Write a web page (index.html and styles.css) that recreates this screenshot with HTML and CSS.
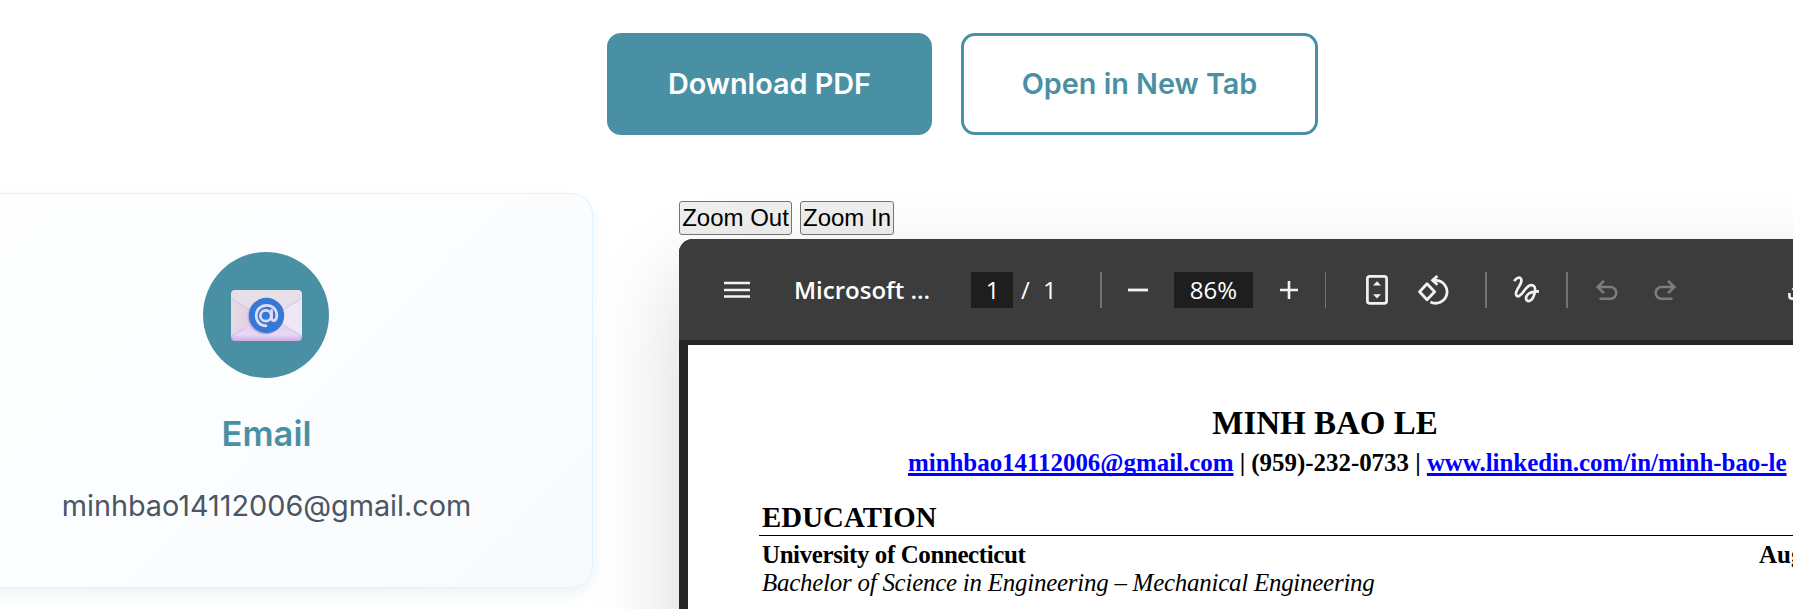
FILE: index.html
```html
<!DOCTYPE html>
<html lang="en">
<head>
<meta charset="utf-8">
<title>Resume</title>
<link rel="stylesheet" href="styles.css">
</head>
<body>
<main class="page">
  <div class="actions">
    <a class="btn btn-solid">Download PDF</a>
    <a class="btn btn-outline">Open in New Tab</a>
  </div>
  <div class="columns">
    <section class="card">
      <div class="badge">
        <svg width="71" height="51" viewBox="0 0 71 51">
          <defs>
            <linearGradient id="env" x1="0" y1="0" x2="0" y2="1"><stop offset="0" stop-color="#e6e0e6"/><stop offset=".6" stop-color="#e8dcf0"/><stop offset="1" stop-color="#d0aee6"/></linearGradient>
            <linearGradient id="side" x1="0" y1="0" x2="1" y2="0"><stop offset="0" stop-color="#e9d9e4"/><stop offset="1" stop-color="#dccde3"/></linearGradient>
            <linearGradient id="low" x1="0" y1="0" x2="0" y2="1"><stop offset="0" stop-color="#ddcdea"/><stop offset=".7" stop-color="#e8d8f5"/><stop offset="1" stop-color="#cfa9e6"/></linearGradient>
          </defs>
          <rect width="71" height="51" rx="4" fill="url(#env)"/>
          <path d="M0 8 30 26 0 46Z" fill="url(#side)"/>
          <path d="M71 8 41 26 71 46Z" fill="#efe8f4"/>
          <path d="M2 46 30 30H41L69 46Q69 51 66 51H5Q2 51 2 46Z" fill="url(#low)"/>
          <path d="M1 9 28 25M70 9 43 25" stroke="#d2c4d8" stroke-width="1" fill="none"/>
          <circle cx="34.5" cy="26.5" r="18" fill="#b8a2d4" opacity=".7"/>
          <circle cx="35.5" cy="25.5" r="17.7" fill="#3379d6"/>
          <g fill="none" stroke="#e4d8f4" stroke-width="2.7" stroke-linecap="round">
            <circle cx="34.8" cy="25.7" r="5.4"/>
            <path d="M40.6 20.4V28C40.6 32.2 45.8 31.6 45.8 25.4 45.8 19 41.3 15.3 35.6 15.3 29.5 15.3 25.2 19.8 25.2 25.6 25.2 31.8 29.4 35.8 35 35.8"/>
          </g>
        </svg>
      </div>
      <h3 class="card-title">Email</h3>
      <p class="card-text">minhbao14112006@gmail.com</p>
    </section>
    <section class="preview">
      <div class="zoom-row"><button class="zoom z-out">Zoom Out</button><button class="zoom z-in">Zoom In</button></div>
      <div class="viewer">
        <div class="toolbar">
          <svg class="i-menu" width="26" height="20" viewBox="0 0 26 20"><path d="M0 3H26M0 10H26M0 16.6H26" stroke="#f2f2f2" stroke-width="2.5"/></svg>
          <span class="doc-name">Microsoft ...</span>
          <span class="box box-page">1</span>
          <span class="slash">/</span>
          <span class="total">1</span>
          <i class="sep s1"></i>
          <svg class="i-minus" width="20" height="20" viewBox="0 0 20 20"><path d="M0 10H20" stroke="#f2f2f2" stroke-width="2.8"/></svg>
          <span class="box box-zoom">86%</span>
          <svg class="i-plus" width="18" height="18" viewBox="0 0 18 18"><path d="M0 9H18M9 0V18" stroke="#f2f2f2" stroke-width="2.6"/></svg>
          <i class="sep s2"></i>
          <svg class="i-fit" width="22" height="30" viewBox="0 0 22 30"><rect x="1.4" y="1.4" width="19.2" height="27" rx="2.4" fill="none" stroke="#f2f2f2" stroke-width="2.7"/><path d="M7 10.5 11 6.2 15 10.5ZM7 19.3H15L11 23.6Z" fill="#f2f2f2"/></svg>
          <svg class="i-rotate" width="32" height="30" viewBox="0 0 32 30"><g fill="none" stroke="#f2f2f2" stroke-width="2.8"><path d="M9 8.8 16.6 16.8 9 24.8 1.6 16.8Z" stroke-linejoin="round"/><path d="M14.4 5.4H18.4A11.4 11.4 0 1 1 12.4 26.9"/><path d="M19.4 .9 14.6 5.3 19.4 9.8"/></g></svg>
          <i class="sep s3"></i>
          <svg class="i-draw" width="27" height="27" viewBox="0 0 27 27"><path d="M1.2 5.2C3 1.8 7.6-.2 8.4 4 9.2 8.4 2.4 13.6 3 18 3.8 22.6 8 19.4 10.6 15.6 13.8 10.8 17.6 7.8 20.6 9.8 24 12.4 20.8 23.6 16.4 25 12.6 25.8 12 21.2 14.8 18.4 17.4 15.8 21.4 15.4 26 15.4" fill="none" stroke="#f2f2f2" stroke-width="2.7"/></svg>
          <i class="sep s4"></i>
          <svg class="i-undo" width="22" height="20" viewBox="0 0 22 20"><path d="M8 .9 1.6 7 8 13.1M1.8 7H14.5A5.8 5.8 0 0 1 14.5 18.7H3.5" fill="none" stroke="#7c7c7c" stroke-width="2.6"/></svg>
          <svg class="i-redo" width="22" height="20" viewBox="0 0 22 20"><path d="M14 .9 20.4 7 14 13.1M20.2 7H7.5A5.8 5.8 0 0 0 7.5 18.7H18.5" fill="none" stroke="#7c7c7c" stroke-width="2.6"/></svg>
          <svg class="i-save" width="24" height="26" viewBox="0 0 24 26"><path d="M1.4 16V19Q1.4 21.6 4 21.6H20Q22.6 21.6 22.6 19V16M12 1V16M4.4 11.2 12 17.4 19.6 11.2" fill="none" stroke="#f2f2f2" stroke-width="2.6"/></svg>
        </div>
        <div class="well">
          <article class="sheet">
            <h1 class="name">MINH BAO LE</h1>
            <p class="contact"><a>minhbao14112006@gmail.com</a> | (959)-232-0733 | <a>www.linkedin.com/in/minh-bao-le</a></p>
            <h2 class="heading">EDUCATION</h2>
            <div class="entry"><b class="school">University of Connecticut</b><b>Aug</b></div>
            <p class="degree">Bachelor of Science in Engineering – Mechanical Engineering</p>
          </article>
        </div>
      </div>
    </section>
  </div>
</main>
</body>
</html>
```
FILE: styles.css
```css
* { box-sizing: border-box; margin: 0; padding: 0; }
html, body { width: 100%; height: 609px; overflow: hidden; background: #fff; }
body { font-family: Inter, "Liberation Sans", sans-serif; }
.page { height: 609px; overflow: hidden; }
.actions { display: flex; gap: 29px; padding: 33px 0 0 607px; }
.btn { display: flex; align-items: center; justify-content: center; height: 102px; padding-bottom: 2px; border: 3px solid #4a90a4; border-radius: 14px; font-size: 28.8px; font-weight: 600; white-space: nowrap; }
.btn-solid { width: 325px; background: #4a90a4; color: #fff; }
.btn-outline { width: 357px; color: #4a90a4; }
.columns { display: flex; align-items: flex-start; padding-top: 58px; }
.card { flex: none; display: flex; flex-direction: column; align-items: center; width: 654px; height: 395px; margin-left: -61px; padding-top: 58px; border: 1px solid #e0f2fe; border-radius: 22px; background: linear-gradient(135deg, #fdfffd 0%, #fcfdff 50%, #f8fafc 100%); box-shadow: 0 7px 14px rgba(74, 144, 164, .1); }
.badge { display: flex; align-items: center; justify-content: center; width: 126px; height: 126px; border-radius: 50%; background: #4a90a4; }
.card-title { margin-top: 34px; padding-left: 1px; font-size: 34.56px; line-height: 44px; font-weight: 600; color: #4a90a4; }
.card-text { margin-top: 27px; padding-left: 1px; font-size: 28.8px; line-height: 46px; color: #4b5563; }
.preview { flex: none; width: 1292px; margin-left: 86px; padding-top: 8px; }
.zoom-row { display: flex; gap: 8px; height: 38px; }
.zoom { height: 34px; border: 1px solid #767676; border-radius: 3px; background: #efefef; color: #000; font: 24px "Liberation Sans", Arial, sans-serif; white-space: nowrap; }
.z-out { width: 113px; }
.z-in { width: 94px; }
.viewer { position: relative; height: 900px; border-radius: 14px; overflow: hidden; background: #262626; box-shadow: 0 36px 90px rgba(0, 0, 0, .16); }
.toolbar { display: flex; align-items: center; height: 101px; background: #3c3c3c; color: #fff; font: 24px "Open Sans", "Noto Sans", sans-serif; }
.toolbar > * { flex: none; }
.i-menu { margin-left: 45px; }
.doc-name { width: 136px; margin-left: 44px; font-weight: 600; white-space: nowrap; }
.box { height: 36px; line-height: 36px; background: #1e1e1e; text-align: center; }
.box-page { width: 42px; margin-left: 41px; padding-left: 1px; }
.slash { width: 10px; margin-left: 8px; }
.total { width: 14px; margin-left: 12px; }
.sep { width: 2px; height: 36px; background: #747474; }
.s1 { margin-left: 43px; }
.i-minus { margin-left: 26px; }
.box-zoom { width: 79px; margin-left: 26px; }
.i-plus { margin-left: 27px; }
.s2 { width: 1px; margin-left: 27px; }
.i-fit { margin-left: 40px; }
.i-rotate { margin-left: 30px; }
.s3 { margin-left: 35px; }
.i-draw { margin-left: 26px; }
.s4 { margin-left: 26px; }
.i-undo { margin-left: 28px; }
.i-redo { margin-left: 36px; }
.i-save { margin-left: 112px; }
.well { padding: 5px 0 0 9px; }
.sheet { width: 1274px; height: 780px; padding: 58px 71px 0; background: #fff; color: #000; font: 24.95px "Liberation Serif", "Times New Roman", serif; }
.name { font-size: 33px; line-height: 40px; text-align: center; }
.contact { margin: 5px -20px 0 149px; line-height: 30px; font-weight: bold; letter-spacing: -.02px; white-space: pre; }
.contact a { color: #00f; text-decoration: underline; text-decoration-thickness: 3px; text-decoration-skip-ink: none; text-underline-offset: 2px; }
.heading { margin-top: 21px; padding: 0 3px; border-bottom: 1px solid #000; font-size: 28.8px; line-height: 36px; letter-spacing: .1px; }
.entry { display: flex; margin-top: 5px; padding-left: 3px; line-height: 28px; }
.school { width: 997px; letter-spacing: -.38px; }
.degree { padding-left: 3px; font-style: italic; line-height: 28px; letter-spacing: -.24px; white-space: nowrap; }
```
